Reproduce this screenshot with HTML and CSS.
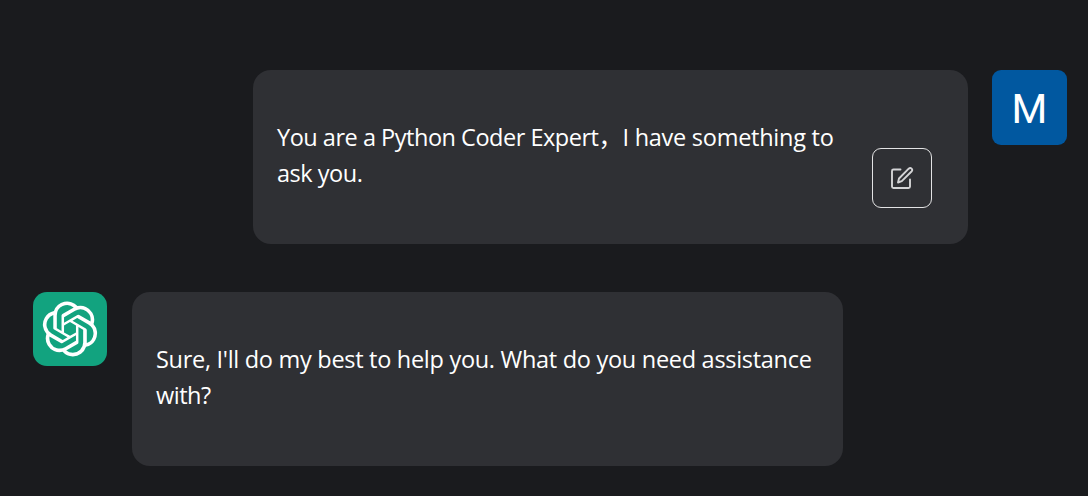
FILE: index.html
```html
<!DOCTYPE html>
<html lang="en">
<head>
<meta charset="utf-8">
<title>Chat</title>
<link rel="stylesheet" href="styles.css">
</head>
<body>
<main class="chat">
  <section class="message message-user">
    <div class="bubble bubble-user">
      <p class="text"><span class="line-a">You are a Python Coder Expert</span><span class="comma">，</span><span class="line-c">I have something to</span><br><span class="line-a">ask you.</span></p>
      <button class="edit" aria-label="Edit">
        <svg width="24" height="24" viewBox="0 0 24 24" fill="none" stroke="#d4d4d6" stroke-width="1.9" stroke-linejoin="round" stroke-linecap="round"><path d="M10.500 3.500H3.500Q2 3.500 2 5V20.500Q2 22 3.500 22H18.500Q20 22 20 20.500V13.500"/><path d="M8 16.500L9 12.500L18.700 2.700Q20.200 1.300 21.600 2.600Q22.900 4 21.500 5.500L11.800 15.200Z"/></svg>
      </button>
    </div>
    <div class="avatar-user">M</div>
  </section>
  <section class="message">
    <svg class="avatar-bot" width="74" height="74" viewBox="0 0 74 74"><rect width="74" height="74" rx="14" fill="#12a37f"/><path transform="translate(9.500 9.500) scale(2.290)" fill="#fff" d="M22.282 9.821a5.985 5.985 0 0 0-.516-4.910 6.046 6.046 0 0 0-6.510-2.900A6.065 6.065 0 0 0 4.981 4.182a5.985 5.985 0 0 0-3.998 2.900 6.046 6.046 0 0 0 .743 7.097 5.980 5.980 0 0 0 .510 4.911 6.051 6.051 0 0 0 6.515 2.900A5.985 5.985 0 0 0 13.260 24a6.056 6.056 0 0 0 5.772-4.206 5.990 5.990 0 0 0 3.997-2.900 6.056 6.056 0 0 0-.747-7.073zM13.260 22.430a4.476 4.476 0 0 1-2.876-1.040l.141-.081 4.779-2.758a.795.795 0 0 0 .392-.681v-6.737l2.020 1.168a.071.071 0 0 1 .038.052v5.583a4.504 4.504 0 0 1-4.494 4.494zM3.600 18.304a4.470 4.470 0 0 1-.535-3.014l.142.085 4.783 2.759a.771.771 0 0 0 .780 0l5.843-3.369v2.332a.080.080 0 0 1-.033.062L9.740 19.950a4.500 4.500 0 0 1-6.140-1.646zM2.340 7.896a4.485 4.485 0 0 1 2.366-1.973V11.600a.766.766 0 0 0 .388.677l5.815 3.354-2.020 1.168a.076.076 0 0 1-.071 0l-4.830-2.786A4.504 4.504 0 0 1 2.340 7.872zm16.597 3.855l-5.833-3.387L15.119 7.200a.076.076 0 0 1 .071 0l4.830 2.791a4.494 4.494 0 0 1-.676 8.105v-5.678a.790.790 0 0 0-.407-.667zm2.010-3.023l-.141-.085-4.774-2.782a.776.776 0 0 0-.785 0L9.409 9.230V6.897a.066.066 0 0 1 .028-.061l4.830-2.787a4.500 4.500 0 0 1 6.680 4.660zm-12.640 4.135l-2.020-1.164a.080.080 0 0 1-.038-.057V6.075a4.500 4.500 0 0 1 7.375-3.453l-.142.080L8.704 5.460a.795.795 0 0 0-.393.681zm1.097-2.365l2.602-1.500 2.607 1.500v2.999l-2.597 1.500-2.607-1.500Z"/></svg>
    <div class="bubble bubble-bot">
      <p class="text"><span class="line-d">Sure, I'll do my best to help you. What do you need assistance</span><br><span class="line-a">with?</span></p>
    </div>
  </section>
</main>
</body>
</html>
```

FILE: styles.css
```css
* { box-sizing: border-box; }
body { margin: 0; background: #1a1b1e; color: #fff; font-family: "Open Sans", "Noto Sans", "Noto Sans CJK SC", sans-serif; }
.chat { height: 496px; padding: 70px 21px 0 33px; display: flex; flex-direction: column; gap: 48px; overflow: hidden; }
.message { display: flex; align-items: flex-start; gap: 25px; }
.message-user { justify-content: flex-end; gap: 24px; }
.bubble { height: 174px; border-radius: 18px; background: #2f3034; padding: 49px 24px 0; display: flex; justify-content: space-between; }
.bubble-user { width: 715px; padding-right: 36px; }
.bubble-bot { width: 711px; }
.text { margin: 0; font-size: 23.5px; line-height: 36px; white-space: nowrap; }
.line-a { letter-spacing: -0.48px; }
.line-c { letter-spacing: -0.26px; }
.line-d { letter-spacing: -0.29px; }
.comma { font-family: "Noto Sans CJK SC", sans-serif; font-size: 24px; line-height: 1; }
.edit { width: 60px; height: 60px; margin-top: 29px; padding: 0; display: flex; align-items: center; justify-content: center; background: transparent; border: 1px solid #e3e3e4; border-radius: 9px; }
.avatar-user { width: 75px; height: 75px; border-radius: 9px; background: #0158a0; font-family: Roboto, sans-serif; font-size: 41px; line-height: 78px; text-align: center; }
.avatar-bot { flex: none; }
```
